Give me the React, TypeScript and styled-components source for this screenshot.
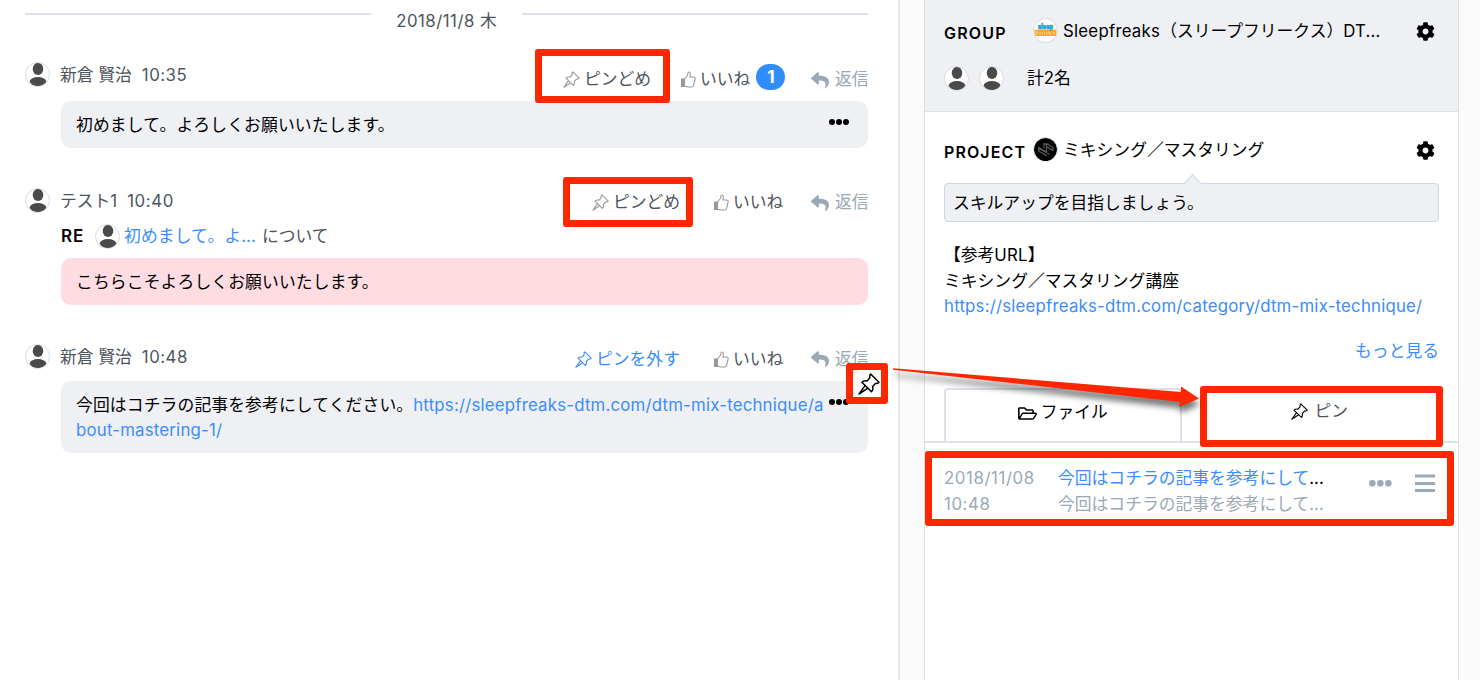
import React from "react";
import styled, { createGlobalStyle } from "styled-components";
import { FaReply, FaCog, FaRegFolderOpen } from "react-icons/fa";

const GlobalStyle = createGlobalStyle`
  * { box-sizing: border-box; }
  body {
    margin: 0;
    background: #fafafa;
    color: #000;
    font-family: Inter, "Noto Sans CJK JP", sans-serif;
    font-size: 16.8px;
    line-height: 25px;
  }
  svg { display: block; flex: none; }
`;

const Page = styled.div`
  position: relative;
  display: flex;
  width: 1480px;
  height: 680px;
  overflow: hidden;
`;

const Timeline = styled.main`
  width: 900px;
  flex: none;
  padding: 8px 30px 0 25px;
  background: #fff;
  border-right: 2px solid #e4e7ea;
`;

const DateDivider = styled.div`
  display: flex;
  align-items: flex-start;
  height: 54px;
  color: #4c545c;
`;

const Rule = styled.span`
  width: 346px;
  height: 2px;
  margin-top: 5px;
  background: #dce2e8;
`;

const DateText = styled.span`
  flex: 1;
  padding-top: 1px;
  text-align: center;
  white-space: nowrap;
`;

const Message = styled.article<{ $height: number }>`
  height: ${(p) => p.$height}px;
`;

const MessageHead = styled.header`
  display: flex;
  align-items: center;
  height: 26px;
  color: #4c545c;
`;

const AvatarRing = styled.span`
  width: 25px;
  height: 25px;
  flex: none;
  margin-top: -1px;
  border-radius: 50%;
  overflow: hidden;
  background: #fff;
  border: 1px solid #d5dce3;
`;

const Author = styled.span`
  margin: 0 10px;
  white-space: nowrap;
`;

const Latin = styled.span<{ $spacing?: number }>`
  letter-spacing: ${(p) => p.$spacing ?? 0.21}px;
  white-space: nowrap;
`;

const Actions = styled.div<{ $shift?: number }>`
  display: flex;
  margin-left: auto;
  padding-top: ${(p) => p.$shift ?? 0}px;
`;

const Action = styled.span<{ $width: number; $color?: string; $icon?: string; $gap?: number }>`
  display: flex;
  align-items: center;
  gap: ${(p) => p.$gap ?? 4}px;
  width: ${(p) => p.$width}px;
  color: ${(p) => p.$color ?? "#4c545c"};
  white-space: nowrap;
  svg { color: ${(p) => p.$icon ?? "inherit"}; }
`;

const LikeCount = styled.span`
  display: flex;
  align-items: center;
  justify-content: center;
  width: 29px;
  height: 26px;
  margin: -5px 0 0 2px;
  border-radius: 13px;
  background: #318dfb;
  color: #fff;
  font-weight: 700;
  font-size: 17px;
`;

const ReplyLine = styled.div`
  display: flex;
  align-items: center;
  height: 25px;
  margin: 10px 0 0 36px;
  color: #4c545c;
`;

const ReplyMark = styled.b`
  width: 34px;
  margin-top: -1px;
  font-weight: 600;
  font-size: 17px;
  letter-spacing: 0.8px;
  color: #000;
`;

const QuotedLink = styled.a`
  margin: 0 6px 0 4px;
  color: #3a8dff;
  letter-spacing: 0.1px;
`;

const Link = styled.a`
  color: #3a8dff;
  text-decoration: none;
`;

const Bubble = styled.div<{ $top: number; $height: number; $pink?: boolean }>`
  display: flex;
  justify-content: space-between;
  height: ${(p) => p.$height}px;
  margin: ${(p) => p.$top}px 0 0 36px;
  padding: 12px 19px 0 15px;
  border-radius: 10px;
  background: ${(p) => (p.$pink ? "#ffdce1" : "#eff0f4")};
`;

const BubbleText = styled.div`
  white-space: nowrap;
  letter-spacing: 0.13px;
`;

const DotsSlot = styled.span<{ $top?: number }>`
  padding-top: ${(p) => p.$top ?? 6}px;
`;

const SidePanel = styled.aside`
  width: 535px;
  flex: none;
  margin-left: 24px;
  background: #fff;
  border: solid #d9dfe6;
  border-width: 0 1px 0 1px;
`;

const GroupBox = styled.section`
  height: 112px;
  padding: 18px 23px 0 19px;
  background: #eff0f4;
  border-bottom: 1px solid #dce2e8;
`;

const PanelRow = styled.div`
  display: flex;
  align-items: center;
  height: 26px;
`;

const Heading = styled.h2<{ $spacing: number }>`
  width: 89px;
  margin: 4px 0 0;
  font-size: 16px;
  font-weight: 600;
  letter-spacing: ${(p) => p.$spacing}px;
`;

const PanelTitle = styled.span`
  margin-left: 5px;
  white-space: nowrap;
`;

const GearSlot = styled.span`
  margin-left: auto;
`;

const Members = styled.div`
  display: flex;
  align-items: center;
  gap: 10px;
  margin-top: 22px;
`;

const MemberCount = styled.span`
  margin-left: 13px;
`;

const ProjectBox = styled.section`
  height: 276px;
  padding: 26px 19px 0;
`;

const ProjectRow = styled(PanelRow)`
  padding-right: 4px;
  margin-top: -1px;
`;

const Goal = styled.div`
  position: relative;
  height: 39px;
  margin-top: 20px;
  padding: 7px 8px;
  background: #eff0f4;
  border: 1px solid #cfd7e0;
  border-radius: 4px;
  &::before {
    content: "";
    position: absolute;
    left: 241px;
    top: -7px;
    width: 12px;
    height: 12px;
    background: #eff0f4;
    border: solid #cfd7e0;
    border-width: 1px 0 0 1px;
    transform: rotate(45deg);
  }
`;

const Description = styled.div`
  margin-top: 21px;
  white-space: nowrap;
  line-height: 25.5px;
`;

const More = styled.div`
  margin-top: 19px;
  text-align: right;
  color: #3a8dff;
`;

const Tabs = styled.div`
  display: flex;
  height: 55px;
  padding-left: 19px;
  border-bottom: 2px solid #dce2e8;
`;

const Tab = styled.div<{ $outlined?: boolean }>`
  display: flex;
  justify-content: center;
  gap: ${(p) => (p.$outlined ? 4 : 6)}px;
  width: ${(p) => (p.$outlined ? 238 : 277)}px;
  height: 53px;
  padding-top: ${(p) => (p.$outlined ? 10 : 11)}px;
  color: ${(p) => (p.$outlined ? "#000" : "#4c545c")};
  border: ${(p) => (p.$outlined ? "solid #dce2e8" : "0")};
  border-width: ${(p) => (p.$outlined ? "2px 2px 0" : "0")};
  border-radius: 4px 4px 0 0;
  svg { color: #000; margin-top: 4px; }
`;

const PinnedItem = styled.div`
  display: flex;
  padding: 23px 22px 0 19px;
  color: #9ba8b5;
  line-height: 25.5px;
`;

const PinnedDate = styled.div`
  width: 114px;
`;

const PinnedText = styled.div`
  width: 311px;
  white-space: nowrap;
`;

const Black = styled.span`
  color: #000;
`;

const MenuSlot = styled.span`
  margin: 8px 0 0 23px;
`;

const Highlight = styled.div<{ $x: number; $y: number; $w: number; $h: number; $fill?: string }>`
  position: absolute;
  left: ${(p) => p.$x}px;
  top: ${(p) => p.$y}px;
  display: flex;
  align-items: center;
  justify-content: center;
  width: ${(p) => p.$w}px;
  height: ${(p) => p.$h}px;
  border: 7px solid #ff2600;
  border-radius: 3px;
  background: ${(p) => p.$fill ?? "transparent"};
  svg { margin-left: 4px; }
`;

const ArrowLayer = styled.svg`
  position: absolute;
  left: 885px;
  top: 355px;
  filter: drop-shadow(1px 6px 3px rgba(0, 0, 0, 0.55));
`;

function Avatar() {
  return (
    <AvatarRing>
      <svg width="23" height="23" viewBox="0 0 23 23" fill="#4a4a4a">
        <ellipse cx="12" cy="6" rx="5.3" ry="6.1" />
        <path d="M3.500 18.500C4.700 15.500 7.500 14 12 14S19.300 15.500 20.500 18.500C19 21.500 16 23 12 23S5 21.500 3.500 18.500Z" />
      </svg>
    </AvatarRing>
  );
}

function PinIcon({ size = 17, stroke = 1.1 }: { size?: number; stroke?: number }) {
  return (
    <svg width={size} height={size} viewBox="0 0 22 22" fill="none" stroke="currentColor" strokeWidth={(stroke * 22) / size} strokeLinejoin="round">
      <path d="M12.600 1L21 9.300C20 10.400 18.700 10.700 17.500 10.500L14.600 13.600C15.300 15.700 14.800 17.500 13.500 18.700L3.900 9.200C5.200 7.900 7 7.400 9 8L11.800 5C11.500 3.500 11.700 2 12.600 1Z" />
      <path d="M7.200 12.400L1 21L9.900 15.200" />
    </svg>
  );
}

function ThumbIcon() {
  return (
    <svg width="15" height="17" viewBox="0 0 15 17" fill="none" stroke="currentColor" strokeWidth="1.1" strokeLinejoin="round">
      <path d="M.5 8H3.500V15.500H.5Z" fill="currentColor" />
      <path d="M3.500 8L6.300 4.500C7 3.500 6.600 1 7.800 1C9.500 1 9.800 3.500 8.800 6H12.500C14 6 14.500 7.300 14 8.500L12.600 14.300C12.300 15.500 11.800 16 10.800 16H7C5.500 16 5 15.200 3.500 15.200" />
    </svg>
  );
}

function Dots({ color = "#000", r = 3, step = 7 }: { color?: string; r?: number; step?: number }) {
  const w = step * 2 + r * 2;
  return (
    <svg width={w} height={r * 2} fill={color}>
      {[0, 1, 2].map((i) => (
        <circle key={i} cx={r + i * step} cy={r} r={r} />
      ))}
    </svg>
  );
}

function MenuIcon() {
  return (
    <svg width="20" height="19" stroke="#9ba8b5" strokeWidth="3">
      <path d="M0 2H20M0 9.500H20M0 16.500H20" />
    </svg>
  );
}

function GroupLogo() {
  return (
    <AvatarRing>
      <svg width="23" height="23" viewBox="0 0 23 23">
        <rect x="0.500" y="10.500" width="22" height="6.500" rx="1" fill="#f9a72b" />
        <text x="4" y="10" fontSize="7" fontWeight="900" fontFamily="Inter" fill="#25a4dd" stroke="#25a4dd" strokeWidth=".6" textLength="15" lengthAdjust="spacingAndGlyphs">sleep</text>
        <path d="M2 12V16M2 12H4M2 14H4M6 13V16M8 13V15.500M10.500 12.500V16M13 13V15.500M15 12V16M17.500 12.500L16 14L17.500 16M20.500 12.500L19 14H20.500V15.500" stroke="#ffdca0" strokeWidth=".8" fill="none" />
      </svg>
    </AvatarRing>
  );
}

function ProjectLogo() {
  return (
    <AvatarRing>
      <svg width="23" height="23" viewBox="0 0 23 23" fill="none">
        <circle cx="11.500" cy="11.500" r="11.500" fill="#000" />
        <path d="M13 18L4.500 13V9.500L12.500 14V5.500L19 9.500M15.500 16.500L4.500 10M10 10.500V5.500L12 6.500M12.500 8.500L19 12.500V9.500" stroke="#5c5c5c" strokeWidth="1.200" />
      </svg>
    </AvatarRing>
  );
}

type ActionsProps = { pinned?: boolean; likes?: number; shift?: number };

function MessageActions({ pinned, likes, shift }: ActionsProps) {
  return (
    <Actions $shift={shift}>
      <Action $width={pinned ? 139 : likes ? 118 : 122} $color={pinned ? "#3a8dff" : undefined} $icon={pinned ? "#3a8dff" : "#999"}>
        <PinIcon />
        {pinned ? "ピンを外す" : "ピンどめ"}
      </Action>
      <Action $width={likes ? 130 : 97} $icon="#999">
        <ThumbIcon />
        いいね
        {likes ? <LikeCount>{likes}</LikeCount> : null}
      </Action>
      <Action $width={57} $color="#9ba8b5" $gap={6}>
        <FaReply size={18} />
        <span>返信</span>
      </Action>
    </Actions>
  );
}

export default function App() {
  return (
    <>
      <GlobalStyle />
      <Page>
        <Timeline>
          <DateDivider>
            <Rule />
            <DateText><Latin $spacing={0.5}>2018/11/8 </Latin>木</DateText>
            <Rule />
          </DateDivider>

          <Message $height={126}>
            <MessageHead>
              <Avatar />
              <Author>新倉 賢治</Author>
              <Latin $spacing={0.5}>10:35</Latin>
              <MessageActions likes={1} shift={9} />
            </MessageHead>
            <Bubble $top={13} $height={47}>
              <BubbleText>初めまして。よろしくお願いいたします。</BubbleText>
              <DotsSlot><Dots /></DotsSlot>
            </Bubble>
          </Message>

          <Message $height={156}>
            <MessageHead>
              <Avatar />
              <Author>テスト1</Author>
              <Latin $spacing={0.6}>10:40</Latin>
              <MessageActions shift={3} />
            </MessageHead>
            <ReplyLine>
              <ReplyMark>RE</ReplyMark>
              <Avatar />
              <QuotedLink>初めまして。よ...</QuotedLink>
              <span>について</span>
            </ReplyLine>
            <Bubble $top={9} $height={47} $pink>
              <BubbleText>こちらこそよろしくお願いいたします。</BubbleText>
            </Bubble>
          </Message>

          <Message $height={120}>
            <MessageHead>
              <Avatar />
              <Author>新倉 賢治</Author>
              <Latin $spacing={0.5}>10:48</Latin>
              <MessageActions pinned shift={4} />
            </MessageHead>
            <Bubble $top={11} $height={72}>
              <BubbleText>
                今回はコチラの記事を参考にしてください。
                <Link><Latin>https://sleepfreaks-dtm.com/dtm-mix-technique/a</Latin></Link>
                <br />
                <Link><Latin>bout-mastering-1/</Latin></Link>
              </BubbleText>
              <DotsSlot><Dots /></DotsSlot>
            </Bubble>
          </Message>
        </Timeline>

        <SidePanel>
          <GroupBox>
            <PanelRow>
              <Heading $spacing={1.2}>GROUP</Heading>
              <GroupLogo />
              <PanelTitle><Latin $spacing={0.25}>Sleepfreaks</Latin>（スリープフリークス）<Latin>DT...</Latin></PanelTitle>
              <GearSlot><FaCog size={19} /></GearSlot>
            </PanelRow>
            <Members>
              <Avatar />
              <Avatar />
              <MemberCount>計2名</MemberCount>
            </Members>
          </GroupBox>

          <ProjectBox>
            <ProjectRow>
              <Heading $spacing={1.1}>PROJECT</Heading>
              <ProjectLogo />
              <PanelTitle>ミキシング／マスタリング</PanelTitle>
              <GearSlot><FaCog size={19} /></GearSlot>
            </ProjectRow>
            <Goal>スキルアップを目指しましょう。</Goal>
            <Description>
              【参考<Latin>URL</Latin>】
              <br />
              ミキシング／マスタリング講座
              <br />
              <Link><Latin>https://sleepfreaks-dtm.com/category/dtm-mix-technique/</Latin></Link>
            </Description>
            <More>もっと見る</More>
          </ProjectBox>

          <Tabs>
            <Tab $outlined>
              <FaRegFolderOpen size={19} />
              ファイル
            </Tab>
            <Tab>
              <PinIcon />
              ピン
            </Tab>
          </Tabs>

          <PinnedItem>
            <PinnedDate>
              <Latin $spacing={0.6}>2018/11/08</Latin>
              <br />
              <Latin $spacing={0.6}>10:48</Latin>
            </PinnedDate>
            <PinnedText>
              <Link>今回はコチラの記事を参考にして</Link><Black>...</Black>
              <br />
              今回はコチラの記事を参考にして...
            </PinnedText>
            <DotsSlot $top={14}><Dots color="#9ba8b5" r={3.3} step={8} /></DotsSlot>
            <MenuSlot><MenuIcon /></MenuSlot>
          </PinnedItem>
        </SidePanel>

        <Highlight $x={535} $y={49} $w={135} $h={54} />
        <Highlight $x={563} $y={177} $w={130} $h={50} />
        <Highlight $x={846} $y={363} $w={42} $h={41} $fill="#fff">
          <PinIcon size={22} stroke={1.5} />
        </Highlight>
        <Highlight $x={1200} $y={386} $w={243} $h={61} />
        <Highlight $x={925} $y={451} $w={529} $h={75} />
        <ArrowLayer width="330" height="70">
          <path d="M8 13.300L296 37L296 31.500L314 43.500L294 52L295 47L8 14.800Z" fill="#ff2600" />
        </ArrowLayer>
      </Page>
    </>
  );
}
